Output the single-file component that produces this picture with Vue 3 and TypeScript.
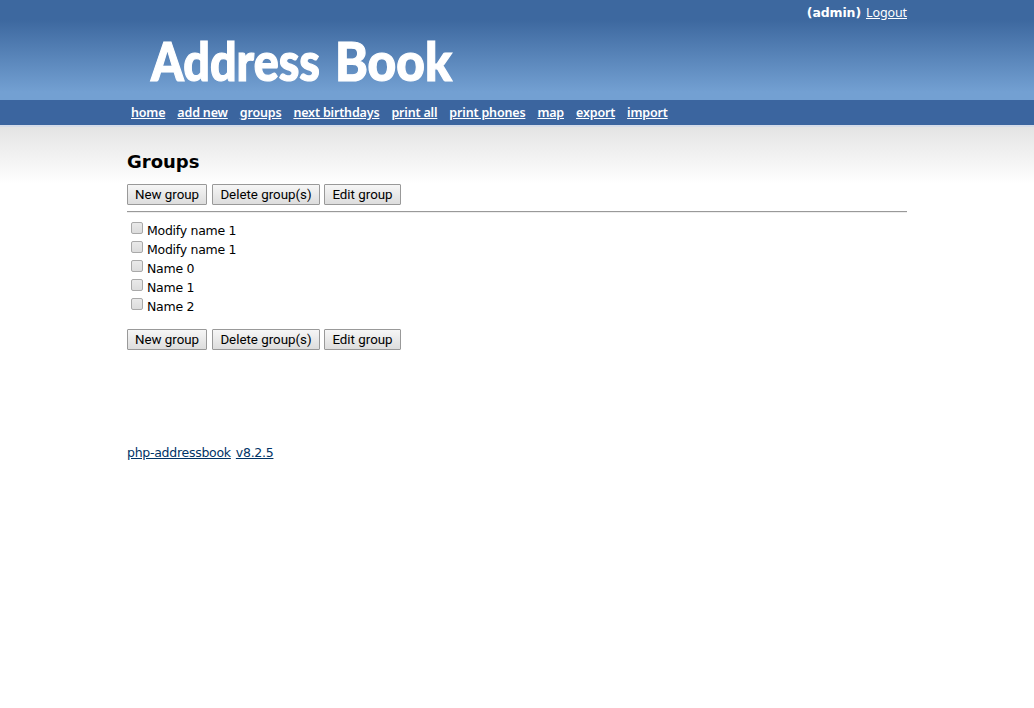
<script setup lang="ts">
import { ref } from 'vue'

const navItems: string[] = ['home', 'add new', 'groups', 'next birthdays', 'print all', 'print phones', 'map', 'export', 'import']
const actions: string[] = ['New group', 'Delete group(s)', 'Edit group']

interface Group { id: number; name: string }
const groups: Group[] = [
  { id: 1, name: 'Modify name 1' },
  { id: 2, name: 'Modify name 1' },
  { id: 3, name: 'Name 0' },
  { id: 4, name: 'Name 1' },
  { id: 5, name: 'Name 2' },
]
const selected = ref<number[]>([])
</script>

<template>
  <div class="page">
    <header class="header">
      <div class="container">
        <div class="account"><b>(admin)</b><a href="#">Logout</a></div>
        <svg class="logo" width="360" height="74" viewBox="0 0 360 74" role="img" aria-label="Address Book">
          <text x="24" y="55" textLength="169" lengthAdjust="spacingAndGlyphs">Address</text>
          <text x="208" y="55" textLength="117" lengthAdjust="spacingAndGlyphs">Book</text>
        </svg>
      </div>
    </header>
    <nav class="nav">
      <ul class="container nav-list">
        <li v-for="item in navItems" :key="item"><a href="#">{{ item }}</a></li>
      </ul>
    </nav>
    <main class="content">
      <div class="container">
        <h1>Groups</h1>
        <div class="actions"><button v-for="a in actions" :key="a" type="button">{{ a }}</button></div>
        <hr>
        <div class="groups">
          <label v-for="g in groups" :key="g.id"><input v-model="selected" type="checkbox" :value="g.id"><span>{{ g.name }}</span></label>
        </div>
        <div class="actions"><button v-for="a in actions" :key="a" type="button">{{ a }}</button></div>
        <footer><a href="#">php-addressbook</a><a href="#">v8.2.5</a></footer>
      </div>
    </main>
  </div>
</template>

<style>
body { margin: 0; background: #fff; }
</style>

<style scoped>
.page { min-height: 708px; font: 12.5px/19px Verdana, "DejaVu Sans", sans-serif; letter-spacing: -0.27px; color: #000; }
.container { width: 780px; margin: 0 auto; }
.header { height: 100px; background: linear-gradient(#3d689f 0, #3d689f 20px, #73a0d2 92px, #73a0d2 100px); }
.account { display: flex; justify-content: flex-end; gap: 5px; height: 26px; line-height: 26px; color: #fff; font-family: "Noto Sans", sans-serif; font-size: 12.5px; letter-spacing: -0.1px; }
.account b { font-family: Verdana, "DejaVu Sans", sans-serif; font-size: 12.5px; letter-spacing: -0.12px; }
.account a, .nav a { color: #fff; }
.logo { display: block; overflow: visible; fill: #fff; stroke: #fff; stroke-width: 1.2; font: 900 53px Lato, sans-serif; letter-spacing: 0; }
.nav { height: 25px; background: #3b659f; border-bottom: 2px solid #d5dce9; }
.nav-list { display: flex; gap: 12px; padding: 0 0 0 4px; box-sizing: border-box; list-style: none; font: 600 12.5px/25px "Noto Sans", sans-serif; letter-spacing: -0.17px; }
.content { background: linear-gradient(#e4e4e4, #fff 57px); }
h1 { margin: 0; padding-top: 23px; font-size: 18px; line-height: 24px; font-weight: 700; letter-spacing: 0; }
.actions { display: flex; gap: 4px; }
h1 + .actions { margin-top: 10px; }
button { height: 21px; padding: 0; border: 1px solid #999; border-radius: 1px; background: linear-gradient(#f6f6f6, #dddddd); color: #000; font: 13.33px/17px Roboto, sans-serif; letter-spacing: 0; white-space: nowrap; }
.actions button:first-child { width: 80px; margin-right: 1px; }
.actions button:nth-child(2) { width: 108px; }
.actions button:nth-child(3) { width: 77px; }
hr { margin: 6px 0 7px; border: 0; border-top: 1px solid #999; border-bottom: 1px solid #eee; height: 0; }
.groups { margin-bottom: 14px; }
label { display: flex; height: 19px; gap: 4px; padding-left: 4px; }
input { appearance: none; width: 12px; height: 12px; margin: 2px 0 0; border: 1px solid #a9a9a9; border-radius: 2px; background: linear-gradient(#e9e9e9, #dcdcdc); flex: none; }
label span { padding-top: 1px; }
footer { display: flex; gap: 5px; margin-top: 93px; }
footer a { color: #003366; }
</style>
